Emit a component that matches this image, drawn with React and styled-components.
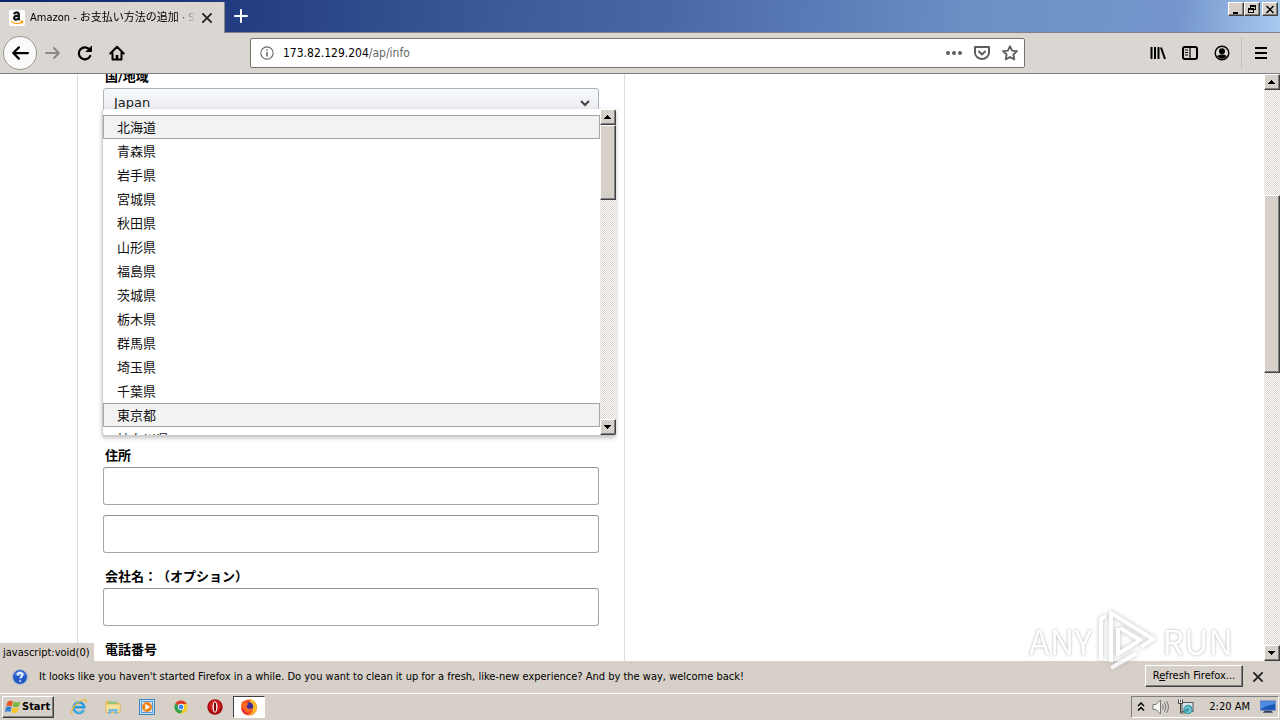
import React from "react";
import styled, { createGlobalStyle, css } from "styled-components";

const ui = `"DejaVu Sans Condensed", "Noto Sans CJK JP", sans-serif`;
const face = "#d6d0c8";

const Global = createGlobalStyle`
  * { box-sizing: border-box; }
  body { margin: 0; background: #fff; color: #000; font: 11px/16px ${ui}; }
  button, input, a, select { font: inherit; color: inherit; }
`;

const Desktop = styled.div`
  height: 100vh;
  display: flex;
  flex-direction: column;
  overflow: hidden;
`;

const raised = css`
  border: 1px solid;
  border-color: #fff #404040 #404040 #fff;
  box-shadow: inset -1px -1px 0 #808080;
  background: ${face};
`;

const TitleBar = styled.header`
  display: flex;
  height: 33px;
  flex: none;
  background: linear-gradient(97deg, #0a246a 0, #213c80 18%, #3c5a98 39%, #4868a4 52%, #5c7eb8 65%, #6c90c4 76%, #7496cc 92%, #a6caf0 100%);
`;

const Tab = styled.div`
  display: flex;
  align-items: center;
  gap: 5px;
  width: 225px;
  margin-top: 2px;
  padding: 0 11px 0 9px;
  background: #dad6d1;
  border-right: 1px solid #8a8a92;
`;

const TitleRest = styled.div`
  display: flex;
  flex: 1;
  border-bottom: 1px solid #80838c;
`;

const TabTitle = styled.span`
  flex: 1;
  overflow: hidden;
  white-space: nowrap;
  mask-image: linear-gradient(90deg, #000 88%, transparent);
`;

const Bare = styled.button`
  display: grid;
  place-items: center;
  padding: 0;
  width: ${(p) => p.$w || 16}px;
  height: 16px;
  flex: none;
  background: none;
  border: 0;
  svg { display: block; }
`;

const NewTab = styled(Bare)`
  width: 32px;
  height: 32px;
`;

const WindowControls = styled.div`
  display: flex;
  margin-left: auto;
  padding: 2px 2px 0 0;
`;

const WindowButton = styled.button`
  ${raised}
  width: 16px;
  height: 14px;
  padding: 0;
  margin-left: ${(p) => (p.$apart ? 2 : 0)}px;
  display: grid;
  place-items: center;
`;

const Toolbar = styled.nav`
  display: flex;
  align-items: center;
  height: 41px;
  flex: none;
  padding: 0 11px 0 3px;
  background: #dad6d1;
  border-bottom: 1px solid #808080;
`;

const BackButton = styled(Bare)`
  width: 34px;
  height: 34px;
  border: 1px solid #9a9793;
  border-radius: 50%;
  background: #fafafa;
`;

const NavGroup = styled.div`
  display: flex;
  align-items: center;
  gap: 16px;
  margin-left: 8px;
`;

const AddressBox = styled.div`
  display: flex;
  align-items: center;
  gap: 12px;
  flex: 0 1 775px;
  height: 30px;
  margin: 0 auto 0 125px;
  padding: 0 6px 0 9px;
  background: #fff;
  border: 1px solid #76746f;
  border-radius: 2px;
`;

const Address = styled.div`
  flex: 1;
  font-size: 12px;
  margin-left: -3px;
  span { color: #666; }
`;

const RightGroup = styled.div`
  display: flex;
  align-items: center;
  gap: 16px;
`;

const Divider = styled.i`
  width: 1px;
  height: 32px;
  background: #c4c0ba;
  margin: 0 -5px;
`;

const Viewport = styled.div`
  position: relative;
  display: flex;
  flex: 1;
  min-height: 0;
  background: #fff;
`;

const PageArea = styled.main`
  flex: 1;
  min-width: 0;
  overflow: hidden;
  padding-left: 77px;
`;

const Card = styled.form`
  max-width: 548px;
  min-height: calc(100% + 8px);
  margin-top: -8px;
  padding: 0 25px;
  border: 1px solid #ddd;
  border-width: 0 1px;
  font: 13px/20px "DejaVu Sans", "Noto Sans CJK JP", sans-serif;
  text-spacing-trim: space-all;
`;

const Label = styled.label`
  display: block;
  padding: 0 2px;
  font-weight: 700;
  line-height: 22px;
`;

const CountryField = styled.div`
  position: relative;
  height: 379px;
`;

const CountrySelect = styled.div`
  position: relative;
  select {
    appearance: none;
    display: block;
    width: 100%;
    height: 30px;
    padding: 0 10px;
    border: 1px solid #adb1b8;
    border-radius: 3px;
    background: linear-gradient(#f7f8fa, #e7e9ec);
    color: #222;
  }
  svg { position: absolute; right: 8px; top: 10px; }
`;

const TextInput = styled.input`
  display: block;
  width: 100%;
  height: 38px;
  margin-bottom: ${(p) => p.$gap}px;
  padding: 0 8px;
  border: 1px solid #a6a6a6;
  border-top-color: #949494;
  border-radius: 3px;
  background: #fff;
`;

const Popup = styled.div`
  position: absolute;
  top: 43px;
  left: -1px;
  right: -17px;
  height: 327px;
  display: flex;
  overflow: hidden;
  background: #fff;
  border: 1px solid #ccc;
  border-width: 0 0 1px 1px;
  border-radius: 3px;
  box-shadow: 0 2px 4px rgba(0, 0, 0, 0.25);
`;

const OptionList = styled.ul`
  flex: 1;
  margin: 0;
  padding: 6px 0 0;
  overflow: hidden;
  list-style: none;
`;

const Option = styled.a`
  display: block;
  height: 24px;
  padding: 0 13px;
  line-height: 24px;
  border: 1px solid ${(p) => (p.$active ? "#a2a6ac" : "transparent")};
  background: ${(p) => (p.$active ? "#f2f2f2" : "none")};
  && { color: #111; }
  text-decoration: none;
`;

const BarTrack = styled.div`
  display: flex;
  flex-direction: column;
  flex: none;
  width: 16px;
  background: repeating-conic-gradient(#d8d4cc 0 25%, #fff 0 50%) 0 0 / 2px 2px;
`;

const BarButton = styled.button`
  ${raised}
  height: 16px;
  flex: none;
  padding: 0;
  display: grid;
  place-items: center;
`;

const Space = styled.div`
  flex: ${(p) => p.$part} 1 0;
`;

const Thumb = styled(Space)`
  ${raised}
`;

const StatusBubble = styled.div`
  position: absolute;
  left: 0;
  bottom: 0;
  height: 18px;
  padding: 2px 4px 0 3px;
  background: ${face};
`;

const Notice = styled.div`
  display: flex;
  align-items: center;
  height: 32px;
  flex: none;
  padding: 0 14px 0 12px;
  background: ${face};
  p {
    flex: 1;
    margin: 0 0 0 11px;
    white-space: nowrap;
  }
`;

const RefreshButton = styled.button`
  ${raised}
  height: 22px;
  width: 98px;
  margin: 0 7px 2px 0;
  padding: 0;
  white-space: nowrap;
`;

const Taskbar = styled.footer`
  display: flex;
  align-items: center;
  height: 27px;
  flex: none;
  padding: 0 1px 0 2px;
  background: ${face};
  border-top: 1px solid #fff;
`;

const StartButton = styled.button`
  ${raised}
  display: flex;
  align-items: center;
  gap: 1px;
  width: 52px;
  height: 22px;
  padding: 0 2px;
  font-weight: 700;
`;

const Launchers = styled.div`
  display: flex;
  align-items: center;
  margin-left: 8px;
`;

const Launcher = styled(Bare)`
  width: ${(p) => (p.$open ? 32 : 34)}px;
  height: 22px;
  ${(p) => p.$open && css`
    background: #fff;
    border: 1px solid;
    border-color: #404040 #fff #fff #404040;
    margin-left: 1px;
  `}
`;

const Tray = styled.div`
  display: flex;
  align-items: center;
  gap: 7px;
  height: 22px;
  margin-left: auto;
  padding: 0 2px 0 5px;
  border: 1px solid;
  border-color: #808080 #fff #fff #808080;
  time { margin: 0 3px 0 8px; white-space: nowrap; }
`;

const Watermark = styled.div`
  position: fixed;
  right: 47px;
  bottom: 46px;
  display: flex;
  align-items: center;
  gap: 6px;
  pointer-events: none;
  color: #fff;
  font: 34px/66px "Noto Sans CJK JP", sans-serif;
  text-shadow: 0 0 3px #aaa, 0 0 1px #bbb;
  opacity: 0.8;
  svg { filter: drop-shadow(0 0 2px #aaa); }
`;

const Arrow = ({ down }) => (
  <svg width="8" height="4" viewBox="0 0 8 4" shapeRendering="crispEdges">
    <path d={down ? "M0 0h7L3.5 4z" : "M0 4h7L3.5 0z"} />
  </svg>
);

const ScrollBar = ({ before, thumb, after }) => (
  <BarTrack>
    <BarButton type="button" aria-label="Scroll up"><Arrow /></BarButton>
    <Space $part={before} />
    <Thumb $part={thumb} />
    <Space $part={after} />
    <BarButton type="button" aria-label="Scroll down"><Arrow down /></BarButton>
  </BarTrack>
);

const Icon = ({ size = 16, color = "#000", w = 2, children }) => (
  <svg width={size} height={size} viewBox="0 0 16 16" fill="none" stroke={color} strokeWidth={w} strokeLinecap="round" strokeLinejoin="round">
    {children}
  </svg>
);

const CrossIcon = ({ size = 12 }) => (
  <Icon size={size} color="#222" w={2.4}><path d="M2.500 2.500l11 11M13.500 2.500L2.500 13.500" /></Icon>
);

const AmazonIcon = () => (
  <svg width="16" height="16" viewBox="0 0 16 16" fill="none">
    <rect width="16" height="16" rx="2" fill="#fff" />
    <path d="M5 4.2C5.600 1.900 9.800 1.600 9.800 4.400V8.200c0 .8.400 1.200.9 1.700M9.800 5.700C7 5.500 5.100 6.200 5.100 8c0 2.300 3.700 2.200 4.700-.2" stroke="#111" strokeWidth="2.200" />
    <path d="M2 11.300c3.500 2.700 8 2.700 11.200.7M11.300 11.200l2.500.1-.7 2.200" stroke="#f90" strokeWidth="1.200" />
  </svg>
);

const StartFlag = () => (
  <svg width="16" height="16" viewBox="0 0 16 16">
    <path d="M2.500 3Q5 .8 8 2.500L6.800 7.300Q4 6 1.200 7.500z" fill="#e8562a" />
    <path d="M8.800 2.800Q12 4.500 15.300 2.500L14 7.300Q11 9 7.600 7.600z" fill="#7ab83c" />
    <path d="M1 8.400Q4 6.800 6.600 8.200L5.300 13Q3 11.500 0 13z" fill="#2f7fd8" />
    <path d="M7.400 8.500Q10.500 10 13.800 8.200L12.500 13Q9.500 15 6.100 13.300z" fill="#f9c42c" />
  </svg>
);

const IeIcon = () => (
  <svg width="18" height="18" viewBox="0 0 18 18" fill="none">
    <path d="M13.800 12A5.300 5.300 0 1 1 14.300 9.300H5" stroke="#2b9be0" strokeWidth="2.600" />
    <path d="M13.800 12A5.300 5.300 0 0 1 4.300 11" stroke="#66c4f2" strokeWidth="1" />
    <path d="M3 15.500C-.5 17 2 9 8 4.500 13 .8 18 .6 16 4.500" stroke="#e9b93a" strokeWidth="1.300" />
  </svg>
);

const FolderIcon = () => (
  <svg width="18" height="18" viewBox="0 0 18 18">
    <path d="M2 3h5l1 1.500h7V15H2z" fill="#e6bd55" />
    <path d="M4 3.500h9v4H4z" fill="#8fc98b" />
    <path d="M1.500 6h15L16 14.500H2z" fill="#f8e29a" stroke="#cfa344" strokeWidth=".6" />
    <path d="M4.500 16v-5h9v5h-2.300v-2.500H6.800V16z" fill="#6fb6e4" />
  </svg>
);

const MediaIcon = () => (
  <svg width="16" height="16" viewBox="0 0 16 16">
    <rect x=".5" y=".5" width="15" height="15" fill="#bfe0f6" stroke="#3b86c4" />
    <rect x="2.500" y="2.500" width="11" height="11" fill="#dcecf8" stroke="#5d9bd0" />
    <circle cx="8" cy="8" r="5" fill="#f08317" />
    <path d="M6.300 5l5 3-5 3z" fill="#fff" />
  </svg>
);

const ChromeIcon = () => (
  <svg width="14" height="14" viewBox="0 0 16 16">
    <circle cx="8" cy="8" r="7.500" fill="#f7c927" />
    <path d="M8 8L1.500 4.200A7.500 7.500 0 0 1 14.600 4.500H8z" fill="#e0392b" />
    <path d="M8 8L1.500 4.200A7.500 7.500 0 0 0 7.500 15.500L11 9.800z" fill="#2f9e4c" />
    <circle cx="8" cy="8" r="3.600" fill="#fff" />
    <circle cx="8" cy="8" r="2.800" fill="#4285f4" />
  </svg>
);

const OperaIcon = () => (
  <svg width="16" height="16" viewBox="0 0 16 16">
    <circle cx="8" cy="8" r="7.700" fill="#a30b10" />
    <circle cx="8" cy="7" r="6" fill="#cc1c20" />
    <ellipse cx="8" cy="8" rx="2.500" ry="5.800" fill="#fff" />
    <ellipse cx="8" cy="8" rx="1.200" ry="4.800" fill="#7a0509" />
  </svg>
);

const FirefoxIcon = () => (
  <svg width="18" height="18" viewBox="0 0 18 18">
    <circle cx="9" cy="9.500" r="8" fill="#f5501e" />
    <path d="M10 1c5 1 8 6 6.500 11C15 16 10 18 6 16.500c6 0 8-4 6-7.500-.5-3-3-4-2-8z" fill="#ffbd2c" />
    <circle cx="9" cy="8.500" r="4.200" fill="#3b2f9c" />
    <path d="M1.500 5L3 2.500 4.500 5c2-.8 3.500 0 4 1L6.500 8C7 11 10 11.500 13 10c-1 5-8 6-11 1.500C1 9 1 7 1.500 5z" fill="#fa6a22" />
    <path d="M2 11c1 4 5 6 9 5-4 0-7-2-7.500-6z" fill="#e31b55" />
  </svg>
);

const HelpIcon = () => (
  <svg width="16" height="16" viewBox="0 0 16 16" fill="none">
    <circle cx="8" cy="8" r="7.300" fill="#2458c4" stroke="#8facd8" />
    <path d="M3 6a5.200 5.200 0 0 1 10 0Q8 8.500 3 6z" fill="#6e9cec" />
    <path d="M5.700 6.200c0-3 4.800-3 4.800-.2 0 1.800-2.300 1.800-2.300 3.600M8.200 11.200v1.600" stroke="#fff" strokeWidth="1.700" />
  </svg>
);

const SpeakerIcon = () => (
  <svg width="18" height="16" viewBox="0 0 18 16" fill="none" stroke="#777">
    <path d="M1 5.500h3L8.500 1v14L4 10.500H1z" fill="#f6f6f6" />
    <path d="M10.500 5.500q1.600 2.500 0 5M12.500 3.500q3 4.500 0 9M14.500 2q4 6 0 12" />
  </svg>
);

const NetworkIcon = () => (
  <svg width="17" height="16" viewBox="0 0 17 16" fill="none">
    <rect x="5" y="3.500" width="11" height="9" fill="#dfe8ea" stroke="#555" />
    <path d="M3.500 4.500V14h5" stroke="#444" />
    <path d="M1.500 .5v4h4v-4M3.500 .5v3" fill="#fff" stroke="#444" />
    <circle cx="11" cy="10.500" r="4.700" fill="#3e9fb0" />
    <path d="M8 9.500q3-3 5 0t-3 4" stroke="#a7e2dd" strokeWidth="1.200" />
  </svg>
);

const DisplayIcon = () => (
  <svg width="16" height="14" viewBox="0 0 17 14">
    <rect x=".5" y=".5" width="16" height="10" fill="#1e55b8" stroke="#6c8fc4" />
    <path d="M1 1h15v3Q9 4 1 9z" fill="#4c8be2" />
    <path d="M5 11h7l2 2H3z" fill="#30405c" />
  </svg>
);

const prefectures = ["北海道", "青森県", "岩手県", "宮城県", "秋田県", "山形県", "福島県", "茨城県", "栃木県", "群馬県", "埼玉県", "千葉県", "東京都", "神奈川県"];
const highlighted = ["北海道", "東京都"];

export default function App() {
  return (
    <Desktop>
      <Global />
      <TitleBar>
        <Tab>
          <AmazonIcon />
          <TabTitle>Amazon - お支払い方法の追加 · SSL</TabTitle>
          <Bare $w={12} aria-label="Close tab"><CrossIcon /></Bare>
        </Tab>
        <TitleRest>
          <NewTab aria-label="New tab"><Icon color="#fff"><path d="M8 2v12M2 8h12" /></Icon></NewTab>
          <WindowControls>
            <WindowButton aria-label="Minimize"><svg width="10" height="9"><path d="M2 7h5v2H2z" /></svg></WindowButton>
            <WindowButton aria-label="Restore">
              <svg width="10" height="9" fill="none" stroke="#000" shapeRendering="crispEdges"><path d="M3.500 3V.5h5v4H7M3 1h6M1.500 3.500h5v4h-5zM1 4h6" /></svg>
            </WindowButton>
            <WindowButton $apart aria-label="Close"><svg width="10" height="9" stroke="#000" strokeWidth="1.500"><path d="M1.500 1l7 7M8.500 1l-7 7" /></svg></WindowButton>
          </WindowControls>
        </TitleRest>
      </TitleBar>

      <Toolbar>
        <BackButton aria-label="Back"><Icon size={18}><path d="M15 8H2M7 3L2 8l5 5" /></Icon></BackButton>
        <NavGroup>
          <Bare aria-label="Forward"><Icon color="#8b8985" w={1.8}><path d="M1 8h13M9 3l5 5-5 5" /></Icon></Bare>
          <Bare aria-label="Reload"><Icon w={2.200}><path d="M13.200 11A6 6 0 1 1 12.500 4.500" /><path d="M14.500 1.500V6.500H9.500z" fill="#000" strokeWidth="1" /></Icon></Bare>
          <Bare aria-label="Home"><Icon><path d="M1.300 8.500L8 1.800l6.700 6.700M3.500 8v6.500h9V8" /><path d="M8 14v-4" strokeWidth="2.600" strokeLinecap="butt" /></Icon></Bare>
        </NavGroup>
        <AddressBox>
          <Icon size={14} color="#6b6b6b" w={1.300}><circle cx="8" cy="8" r="7" /><path d="M8 7.500v4M8 4.500v.3" strokeWidth="1.800" /></Icon>
          <Address>173.82.129.204<span>/ap/info</span></Address>
          <Bare aria-label="Page actions"><svg width="16" height="16" fill="#5e5e5e"><circle cx="2" cy="8" r="2" /><circle cx="8" cy="8" r="2" /><circle cx="14" cy="8" r="2" /></svg></Bare>
          <Bare aria-label="Save to Pocket"><Icon color="#5e5e5e"><path d="M1 2h14v5.500a7 6.500 0 0 1-14 0zM5 6.500l3 3 3-3" /></Icon></Bare>
          <Bare aria-label="Bookmark"><Icon color="#5e5e5e" w={1.800}><path d="M8 1.200l2.100 4.400 4.900.6-3.600 3.300.9 4.900L8 12l-4.300 2.400.9-4.900L1 6.200l4.900-.6z" /></Icon></Bare>
        </AddressBox>
        <RightGroup>
          <Bare aria-label="Library"><Icon><path d="M1.500 2v12M5 2v12M8.500 2v12M11 2.500l4 11.500" strokeLinecap="butt" /></Icon></Bare>
          <Bare aria-label="Sidebars"><Icon><rect x="1" y="2" width="14" height="12" rx="2" /><path d="M8 2v12M3 5h3M3 7.500h3M3 10h3" strokeWidth="1.200" strokeLinecap="butt" /></Icon></Bare>
          <Bare aria-label="Account"><Icon w={1.400}><circle cx="8" cy="8" r="6.800" /><circle cx="8" cy="6.300" r="2.300" fill="#000" /><path d="M4 11.300q4-2 8 0-4 3.500-8 0z" fill="#000" /></Icon></Bare>
          <Divider />
          <Bare aria-label="Menu"><Icon><path d="M2 3h12M2 8h12M2 13h12" strokeLinecap="butt" /></Icon></Bare>
        </RightGroup>
      </Toolbar>

      <Viewport>
        <PageArea>
          <Card>
            <CountryField>
              <Label htmlFor="country">国/地域</Label>
              <CountrySelect>
                <select id="country" defaultValue="Japan"><option>Japan</option></select>
                <svg width="12" height="10" viewBox="0 0 12 10" fill="none" stroke="#444" strokeWidth="2"><path d="M2 3l4 4 4-4" /></svg>
              </CountrySelect>
              <Popup>
                <OptionList>
                  {prefectures.map((name) => (
                    <li key={name}><Option href="#" $active={highlighted.includes(name)}>{name}</Option></li>
                  ))}
                </OptionList>
                <ScrollBar before={0} thumb={73} after={221} />
              </Popup>
            </CountryField>
            <Label htmlFor="address1">住所</Label>
            <TextInput id="address1" $gap={10} />
            <TextInput aria-label="住所 2" $gap={13} />
            <Label htmlFor="company">会社名：（オプション）</Label>
            <TextInput id="company" $gap={13} />
            <Label as="div">電話番号</Label>
          </Card>
        </PageArea>
        <ScrollBar before={105} thumb={177} after={273} />
        <StatusBubble>javascript:void(0)</StatusBubble>
      </Viewport>

      <Notice>
        <HelpIcon />
        <p>It looks like you haven't started Firefox in a while. Do you want to clean it up for a fresh, like-new experience? And by the way, welcome back!</p>
        <RefreshButton>R<u>e</u>fresh Firefox...</RefreshButton>
        <Bare aria-label="Dismiss"><CrossIcon /></Bare>
      </Notice>

      <Taskbar>
        <StartButton><StartFlag />Start</StartButton>
        <Launchers>
          <Launcher aria-label="Internet Explorer"><IeIcon /></Launcher>
          <Launcher aria-label="Explorer"><FolderIcon /></Launcher>
          <Launcher aria-label="Media Player"><MediaIcon /></Launcher>
          <Launcher aria-label="Chrome"><ChromeIcon /></Launcher>
          <Launcher aria-label="Opera"><OperaIcon /></Launcher>
          <Launcher $open aria-label="Firefox"><FirefoxIcon /></Launcher>
        </Launchers>
        <Tray>
          <svg width="8" height="12" viewBox="0 0 8 12" fill="none" stroke="#000" strokeWidth="1.500"><path d="M1 5l3-3 3 3M1 9.500l3-3 3 3" /></svg>
          <SpeakerIcon />
          <NetworkIcon />
          <time>2:20 AM</time>
          <DisplayIcon />
        </Tray>
      </Taskbar>

      <Watermark>
        <span>ANY</span>
        <svg width="58" height="62" viewBox="0 0 58 62" fill="none" stroke="#fff" strokeWidth="4" strokeLinejoin="round">
          <path d="M3 50V9l5-3M13 52V3l42 26-12 8M20 18v26l22-14-20-12M13 58l26-15" />
        </svg>
        <span>RUN</span>
      </Watermark>
    </Desktop>
  );
}
